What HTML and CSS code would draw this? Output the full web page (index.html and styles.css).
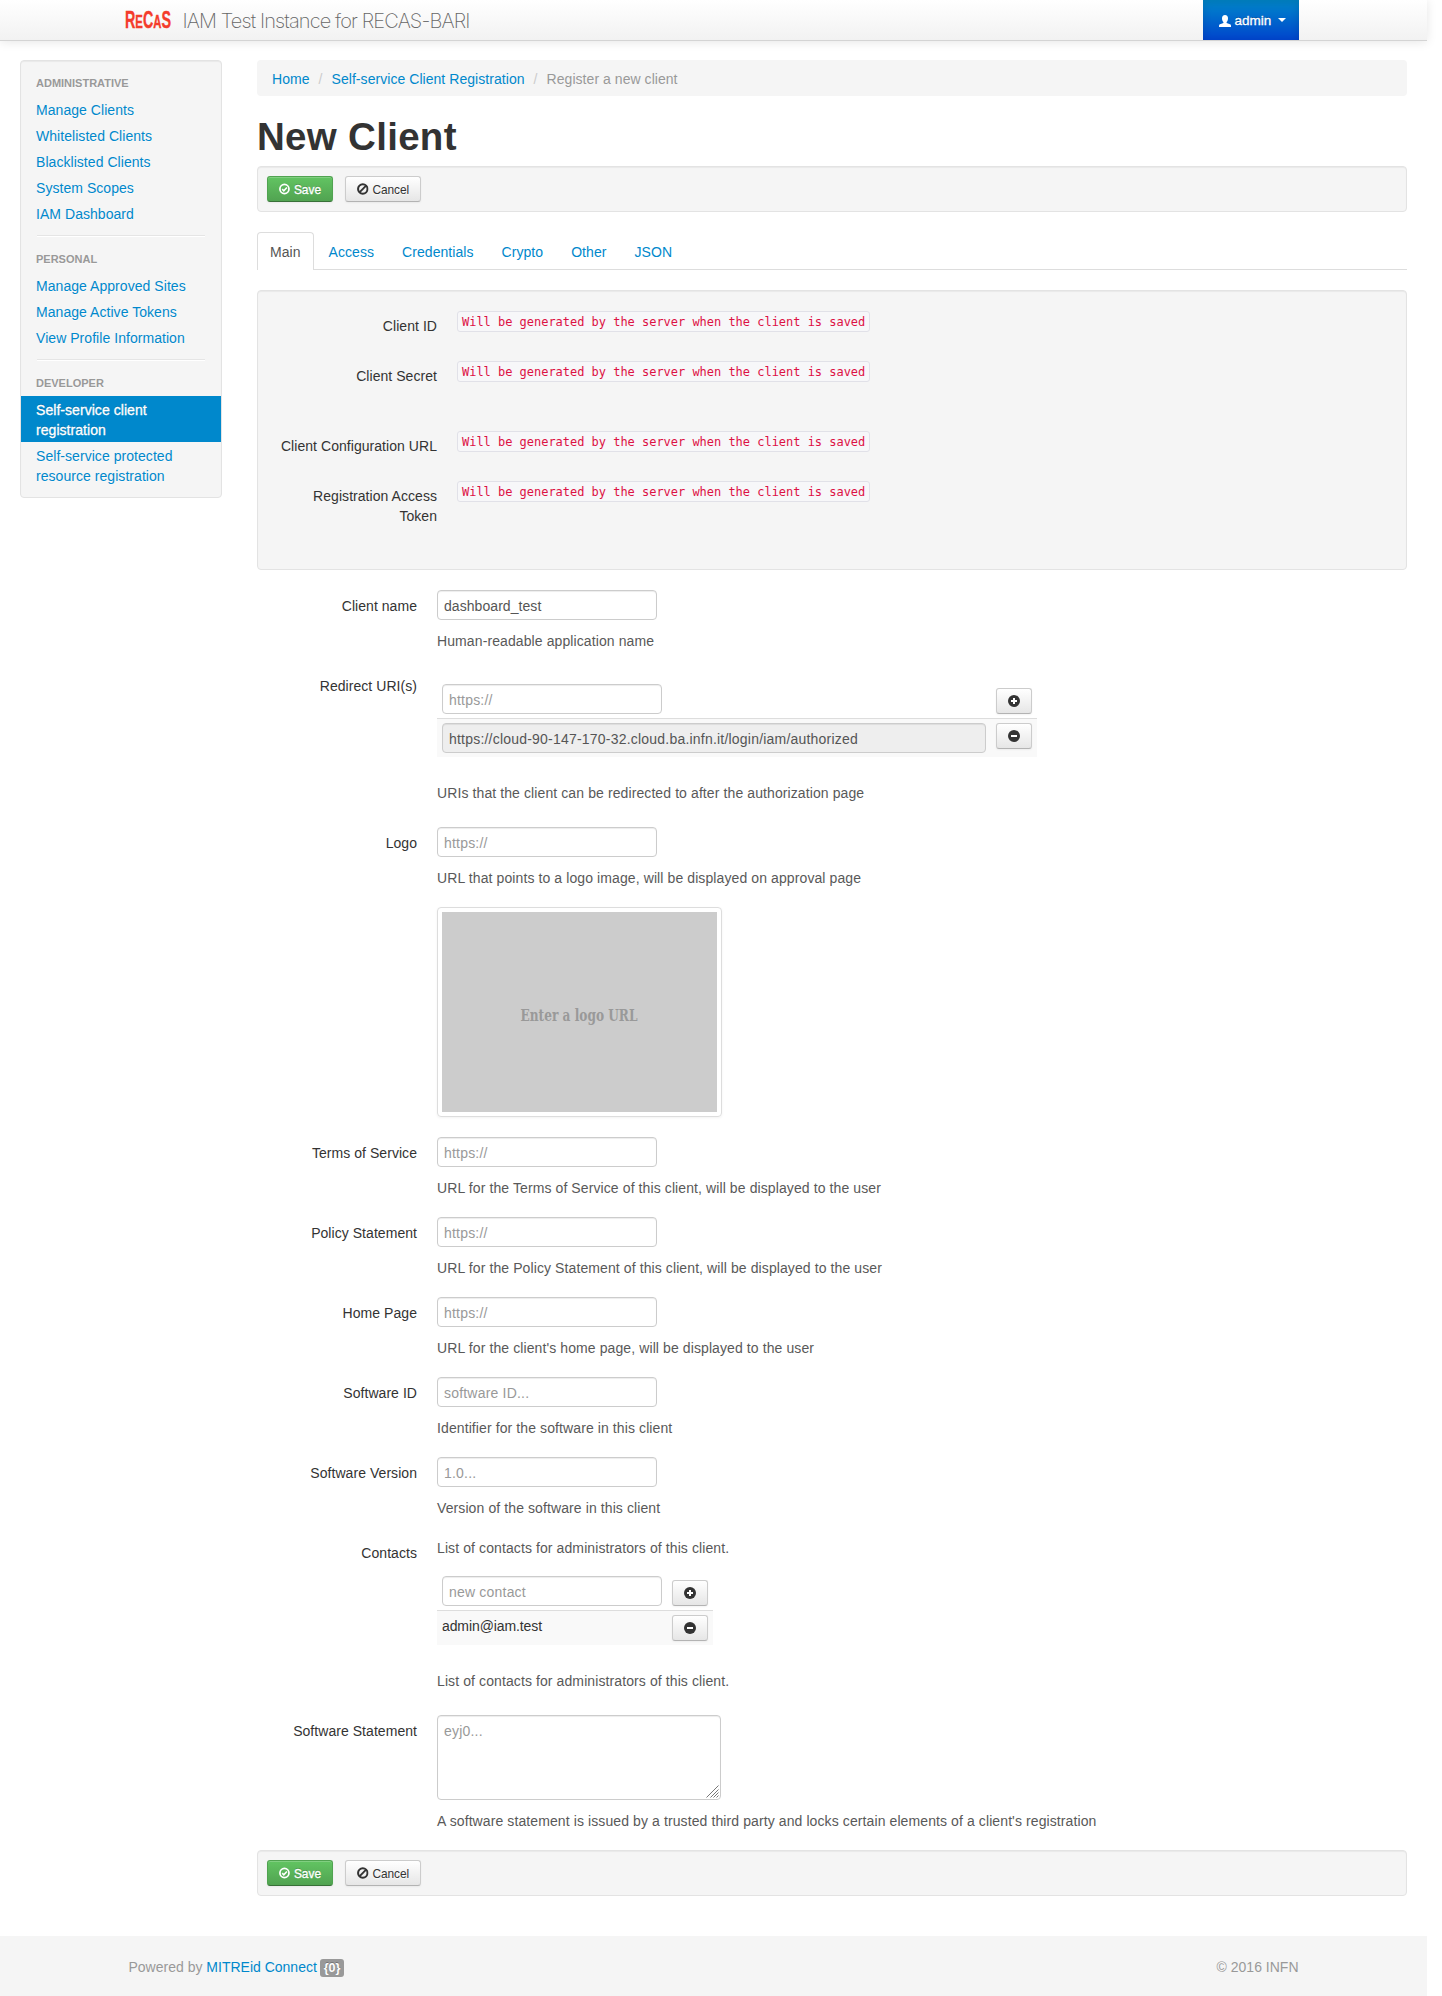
FILE: index.html
```html
<!DOCTYPE html>
<html lang="en">
<head>
<meta charset="utf-8">
<title>IAM Test Instance for RECAS-BARI - New Client</title>
<link rel="stylesheet" href="styles.css">
</head>
<body>
<svg class="sprite" width="0" height="0" aria-hidden="true">
  <symbol id="ok" viewBox="0 0 12 12"><circle cx="6" cy="6" r="5" fill="none" stroke="currentColor" stroke-width="1.9"/><path d="M3.5 6.1 5.3 7.9 8.7 4.4" fill="none" stroke="currentColor" stroke-width="1.8"/></symbol>
  <symbol id="ban" viewBox="0 0 12 12"><circle cx="6" cy="6" r="4.9" fill="none" stroke="currentColor" stroke-width="2.1"/><path d="M2.8 9.2 9.2 2.8" stroke="currentColor" stroke-width="2"/></symbol>
  <symbol id="plus" viewBox="0 0 12 12"><circle cx="6" cy="6" r="6" fill="currentColor"/><path d="M6 3v6M3 6h6" stroke="#fff" stroke-width="2"/></symbol>
  <symbol id="minus" viewBox="0 0 12 12"><circle cx="6" cy="6" r="6" fill="currentColor"/><path d="M3 6h6" stroke="#fff" stroke-width="2"/></symbol>
  <symbol id="user" viewBox="0 0 12 12"><path d="M6 0C8 0 9 1.3 9 3.2 9 5 8.4 6.300 7.600 7v1L11 9.200C11.700 9.500 12 10 12 10.700V12H0v-1.300C0 10 .3 9.500 1 9.200L4.400 8V7C3.600 6.300 3 5 3 3.200 3 1.300 4 0 6 0z" fill="currentColor"/></symbol>
</svg>
<div class="page">
  <header class="navbar">
    <div class="container">
      <div class="brand">
        <svg class="logo" width="46" height="36" viewBox="0 0 46 36"><text class="logo-text" x="0" y="26" textLength="46" lengthAdjust="spacingAndGlyphs">R<tspan class="low">E</tspan>C<tspan class="low">A</tspan>S</text></svg>
        <span class="title">IAM Test Instance for RECAS-BARI</span>
      </div>
      <a class="user"><svg width="12" height="12"><use href="#user"/></svg><span>admin</span><i class="caret"></i></a>
    </div>
  </header>

  <div class="body">
    <nav class="sidebar well">
      <h6>Administrative</h6>
      <a>Manage Clients</a>
      <a>Whitelisted Clients</a>
      <a>Blacklisted Clients</a>
      <a>System Scopes</a>
      <a>IAM Dashboard</a>
      <hr>
      <h6>Personal</h6>
      <a>Manage Approved Sites</a>
      <a>Manage Active Tokens</a>
      <a>View Profile Information</a>
      <hr>
      <h6>Developer</h6>
      <a class="active">Self-service client registration</a>
      <a>Self-service protected resource registration</a>
    </nav>

    <main>
      <div class="breadcrumb"><a>Home</a><i>/</i><a>Self-service Client Registration</a><i>/</i><span>Register a new client</span></div>
      <h1>New Client</h1>
      <div class="well actions">
        <button class="btn save"><svg width="12" height="12"><use href="#ok"/></svg><span>Save</span></button>
        <button class="btn cancel"><svg width="12" height="12"><use href="#ban"/></svg><span>Cancel</span></button>
      </div>
      <div class="tabs">
        <a class="active">Main</a><a>Access</a><a>Credentials</a><a>Crypto</a><a>Other</a><a>JSON</a>
      </div>

      <section class="well generated">
        <div class="group"><label>Client ID</label><code>Will be generated by the server when the client is saved</code></div>
        <div class="group secret"><label>Client Secret</label><code>Will be generated by the server when the client is saved</code></div>
        <div class="group"><label>Client Configuration URL</label><code>Will be generated by the server when the client is saved</code></div>
        <div class="group"><label>Registration Access Token</label><code>Will be generated by the server when the client is saved</code></div>
      </section>

      <form>
        <div class="group"><label>Client name</label><div class="controls"><input type="text" value="dashboard_test"><p>Human-readable application name</p></div></div>
        <div class="group"><label>Redirect URI(s)</label><div class="controls">
          <div class="list uris">
            <div class="row"><input type="text" placeholder="https://"><button type="button" class="btn icon"><svg width="12" height="12"><use href="#plus"/></svg></button></div>
            <div class="row item"><input type="text" class="wide" readonly value="https://cloud-90-147-170-32.cloud.ba.infn.it/login/iam/authorized"><button type="button" class="btn icon"><svg width="12" height="12"><use href="#minus"/></svg></button></div>
          </div>
          <p class="after-list">URIs that the client can be redirected to after the authorization page</p></div></div>
        <div class="group"><label>Logo</label><div class="controls"><input type="text" placeholder="https://"><p>URL that points to a logo image, will be displayed on approval page</p>
          <div class="thumbnail"><svg width="275" height="200"><rect width="275" height="200" fill="#ccc"/><text class="thumb-text" x="78.500" y="108.500" textLength="117" lengthAdjust="spacingAndGlyphs">Enter a logo URL</text></svg></div></div></div>
        <div class="group"><label>Terms of Service</label><div class="controls"><input type="text" placeholder="https://"><p>URL for the Terms of Service of this client, will be displayed to the user</p></div></div>
        <div class="group"><label>Policy Statement</label><div class="controls"><input type="text" placeholder="https://"><p>URL for the Policy Statement of this client, will be displayed to the user</p></div></div>
        <div class="group"><label>Home Page</label><div class="controls"><input type="text" placeholder="https://"><p>URL for the client's home page, will be displayed to the user</p></div></div>
        <div class="group"><label>Software ID</label><div class="controls"><input type="text" placeholder="software ID..."><p>Identifier for the software in this client</p></div></div>
        <div class="group"><label>Software Version</label><div class="controls"><input type="text" placeholder="1.0..."><p>Version of the software in this client</p></div></div>
        <div class="group"><label>Contacts</label><div class="controls">
          <p class="lead">List of contacts for administrators of this client.</p>
          <div class="list contacts">
            <div class="row"><input type="text" placeholder="new contact"><button type="button" class="btn icon"><svg width="12" height="12"><use href="#plus"/></svg></button></div>
            <div class="row item"><span class="contact">admin@iam.test</span><button type="button" class="btn icon"><svg width="12" height="12"><use href="#minus"/></svg></button></div>
          </div>
          <p class="after-list">List of contacts for administrators of this client.</p></div></div>
        <div class="group"><label>Software Statement</label><div class="controls">
          <div class="area"><textarea placeholder="eyj0..."></textarea><svg class="grip" width="13" height="13"><path d="M.5 12.500 12.500.5M4.500 12.500l8-8M7.500 12.500l5-5M10.500 12.500l2-2" stroke="#777" stroke-width="1"/></svg></div>
          <p>A software statement is issued by a trusted third party and locks certain elements of a client's registration</p></div></div>
      </form>

      <div class="well actions">
        <button class="btn save"><svg width="12" height="12"><use href="#ok"/></svg><span>Save</span></button>
        <button class="btn cancel"><svg width="12" height="12"><use href="#ban"/></svg><span>Cancel</span></button>
      </div>
    </main>
  </div>

  <footer>
    <div class="container">
      <div>Powered by <a>MITREid Connect</a> <span class="badge">{0}</span></div>
      <div>© 2016 INFN</div>
    </div>
  </footer>
</div>
</body>
</html>
```
FILE: styles.css
```css
* { box-sizing: border-box; }
body { margin: 0; background: #fff; color: #333; font: 14px/20px "Liberation Sans", Arial, sans-serif; }
.sprite { display: block; }
.page { width: 1427px; height: 1996px; display: flex; flex-direction: column; }
a { color: #08c; text-decoration: none; }
.container { width: 1170px; margin: 0 auto; display: flex; justify-content: space-between; }

.navbar { height: 41px; flex: none; background: linear-gradient(#fff, #f2f2f2); border-bottom: 1px solid #d4d4d4; box-shadow: 0 1px 10px rgba(0,0,0,.1); }
.brand { display: flex; align-items: center; height: 40px; }
.logo { margin: 0 12px 0 -4px; overflow: visible; }
.logo-text { font: bold 24px "Liberation Sans", Arial, sans-serif; fill: #f43c2b; stroke: #f43c2b; stroke-width: .4px; }
.low { font-size: 19px; }
.title { font: 200 20px/24px Inter, sans-serif; letter-spacing: -.88px; color: #666; padding-top: 2px; white-space: nowrap; }
.user { width: 96px; height: 40px; padding: 2px 0 0 16px; display: flex; align-items: center; color: #fff; background: linear-gradient(#08c, #04c); box-shadow: inset 0 3px 8px rgba(0,0,0,.125); text-shadow: 0 -1px 0 rgba(0,0,0,.25); }
.user span { margin: 0 7px 0 4px; font-size: 13.500px; -webkit-text-stroke: .3px #fff; }
.caret { border: 4px solid transparent; border-top-color: #fff; border-bottom: 0; margin-top: -3px; }

.body { display: flex; align-items: flex-start; justify-content: space-between; padding: 19px 20px 0; flex: 1; }
.well { background: #f5f5f5; border: 1px solid #e3e3e3; border-radius: 4px; box-shadow: inset 0 1px 1px rgba(0,0,0,.05); }
.sidebar { width: 202px; padding: 9px 0; display: flex; flex-direction: column; text-shadow: 0 1px 0 rgba(255,255,255,.5); }
.sidebar h6 { margin: 0; padding: 3px 15px; font-size: 11px; line-height: 20px; color: #999; text-transform: uppercase; }
.sidebar a { padding: 4px 15px 2px; letter-spacing: .05px; }
.sidebar .active { background: #08c; color: #fff; text-shadow: 0 -1px 0 rgba(0,0,0,.2); -webkit-text-stroke: .3px #fff; }
.sidebar hr { width: 168px; height: 2px; margin: 9px 16px; border: 0; background: #e5e5e5; border-bottom: 1px solid #fff; }

main { width: 1150px; }
.breadcrumb { height: 36px; padding: 9px 15px 7px; background: #f5f5f5; border-radius: 4px; display: flex; color: #999; letter-spacing: .05px; }
.breadcrumb i { width: 4px; margin: 0 9px; font-style: normal; color: #ccc; }
h1 { height: 40px; margin: 20px 0 10px; padding-top: 1px; font-size: 38.500px; line-height: 40px; letter-spacing: .3px; }
.actions { height: 46px; padding: 9px; display: flex; gap: 12px; margin-bottom: 20px; }
.btn { height: 26px; padding: 2px 11px; display: flex; align-items: center; gap: 4px; font: 11.900px/20px "Liberation Sans", Arial, sans-serif; color: #333; border: 1px solid #ccc; border-bottom-color: #b3b3b3; border-radius: 3px; background: linear-gradient(#fff, #e6e6e6); box-shadow: inset 0 1px 0 rgba(255,255,255,.2), 0 1px 2px rgba(0,0,0,.05); text-shadow: 0 1px 1px rgba(255,255,255,.75); }
.btn span { padding-top: 1px; }
.save { width: 66px; color: #fff; border-color: #51a351 #51a351 #387038; background: linear-gradient(#62c462, #51a351); text-shadow: 0 -1px 0 rgba(0,0,0,.25); -webkit-text-stroke: .3px #fff; }
.cancel { width: 76px; letter-spacing: -.1px; }
.tabs { height: 38px; display: flex; gap: 2px; border-bottom: 1px solid #ddd; margin-bottom: 20px; }
.tabs a { height: 38px; padding: 9px 12px 8px; border: 1px solid transparent; border-bottom: 0; border-radius: 4px 4px 0 0; letter-spacing: .06px; }
.tabs .active { color: #555; border-color: #ddd; background: #fff; }

.group { display: flex; gap: 20px; margin-bottom: 20px; }
.group label { width: 160px; padding-top: 6px; margin-bottom: 4px; text-align: right; flex: none; letter-spacing: .05px; }
.generated { height: 280px; padding: 19px; margin-bottom: 20px; }
.generated .secret { margin-bottom: 40px; }
code { height: 21px; margin-top: 1px; padding: 1px 4px 0; font: 12px/18px "DejaVu Sans Mono", monospace; letter-spacing: -.024px; color: #d14; background: #f7f7f9; border: 1px solid #e1e1e8; border-radius: 3px; white-space: nowrap; }

p { height: 20px; margin: 10px 0 0; padding-top: 1px; color: #595959; letter-spacing: .1px; }
input, textarea { display: block; width: 220px; height: 30px; padding: 5px 6px 3px; font: 14px/20px "Liberation Sans", Arial, sans-serif; letter-spacing: .06px; color: #555; border: 1px solid #ccc; border-radius: 4px; background: #fff; box-shadow: inset 0 1px 1px rgba(0,0,0,.075); outline: 0; }
input::placeholder, textarea::placeholder { color: #999; opacity: 1; letter-spacing: .2px; }
input.wide { width: 544px; background: #eee; letter-spacing: .21px; }
.list .row { display: flex; justify-content: space-between; align-items: flex-end; padding: 4px 5px; }
.list .item { align-items: flex-start; background: #f9f9f9; border-top: 1px solid #ddd; }
.contact { padding-top: 1px; letter-spacing: -.1px; }
.icon { width: 36px; padding: 0 11px; }
.uris { width: 600px; padding-top: 10px; }
.contacts { width: 276px; padding-top: 15px; }
.after-list { margin: 25px 0 5px; }
.lead { margin: 0; }
.thumbnail { width: 285px; height: 210px; margin-top: 20px; padding: 4px; border: 1px solid #ddd; border-radius: 4px; box-shadow: 0 1px 3px rgba(0,0,0,.055); }
.thumbnail svg { display: block; }
.thumb-text { font: bold 16.500px "DejaVu Serif Condensed", "DejaVu Serif", serif; fill: #999; }
.area { position: relative; width: 284px; }
textarea { width: 284px; height: 85px; resize: none; }
.grip { position: absolute; right: 2px; bottom: 2px; }

footer { height: 60px; flex: none; background: #f5f5f5; color: #999; padding-top: 21px; }
.badge { display: inline-block; height: 18px; padding: 2px 4px; margin-left: -1px; border-radius: 3px; background: #999; color: #fff; font-size: 12.500px; line-height: 15px; font-weight: bold; text-shadow: 0 -1px 0 rgba(0,0,0,.25); }
```
